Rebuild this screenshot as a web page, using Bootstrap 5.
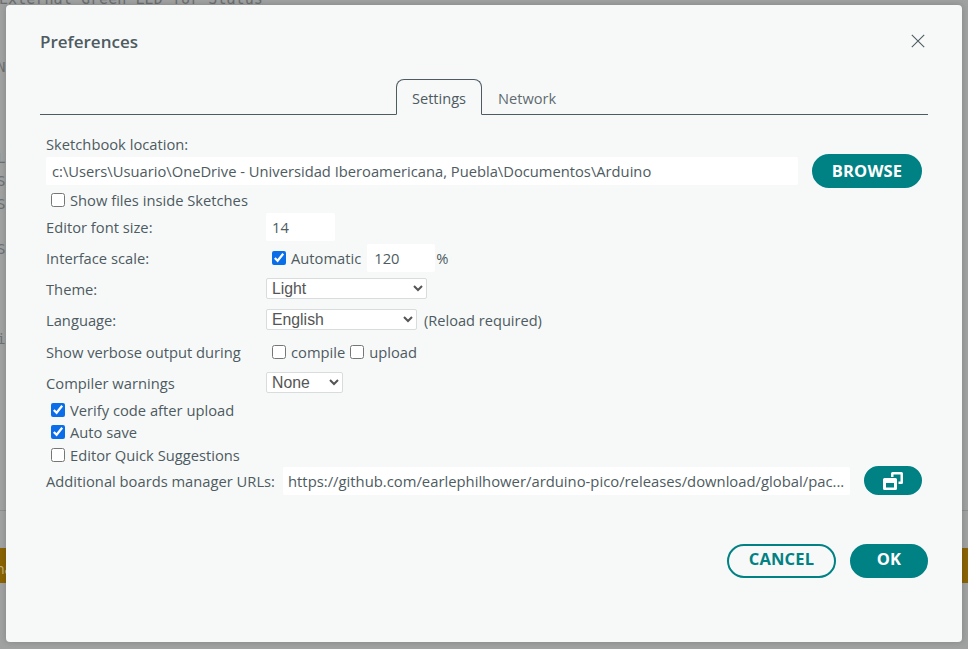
<!DOCTYPE html>
<html lang="en">
<head>
<meta charset="utf-8">
<title>Preferences</title>
<link href="https://cdn.jsdelivr.net/npm/bootstrap@5.3.0/dist/css/bootstrap.min.css" rel="stylesheet">
<style>
html,body{height:100%;overflow:hidden}
body{background:#a0a1a1;font-family:"Open Sans",sans-serif;font-size:14px;color:#4e5b61;position:relative}
.bg-code{font-family:"DejaVu Sans Mono",monospace;font-size:15px;letter-spacing:.07px;color:#6b6f70;line-height:1;white-space:pre;margin:0}
.bg-top{margin:-8px 0 0 -1px;height:66px}
.bg-rule{position:absolute;left:0;right:0;top:510px;height:1px;background:#8d8e8e}
.bg-amber{position:absolute;left:0;right:0;top:548px;height:35px;background:#8a6404}
.bg-letters{position:absolute;left:0;top:0;width:6px;height:649px;overflow:hidden}
.bg-letters span{position:absolute;left:-3px;font-family:"DejaVu Sans Mono",monospace;font-size:14px;color:#6b7274}
.bg-letters .on-amber{left:-4px;top:558px;color:#c9b27a;font-family:"Open Sans",sans-serif}
.dlg{position:absolute;left:6px;top:5px;width:956px;height:637px;background:#f7f9f9;border-radius:4px;box-shadow:0 0 6px rgba(0,0,0,.18);padding:0 34px;display:flex;flex-direction:column}
.dlg-head{height:72px;padding-top:24px}
.dlg-title{font-size:17px;font-weight:600;color:#4e5b61;line-height:26px;margin:0}
.dlg-x{width:14px;height:14px;margin:0 3px 0 0;display:block;background:none;border:0;padding:0}
.tabbar{height:38px;border-bottom:1px solid #4e5b61;padding-left:356px;flex-wrap:nowrap;align-items:flex-end}
.tabbar .nav-link{font-size:14.6px;color:#4e5b61;height:36px;padding:0 15px;line-height:38px;border-radius:8px 8px 0 0;margin-bottom:-1px;width:86px;text-align:center}
.tabbar .nav-link.active{background:#f7f9f9;color:#4e5b61;border:1px solid #4e5b61;border-bottom-color:#f7f9f9;padding:0;line-height:37px}
.tabbar .nav-link.other{color:#5f6b70;margin-left:1px;width:auto}
.form-wrap{padding:19px 6px 0;font-size:14.72px}
.fw{display:flex;align-items:center;line-height:20px}
.lbl{width:220px;flex:none}
.field{background:#fff;border:0;border-radius:2px;font-size:14.72px;color:#4e5b61;padding:0 6px;height:28px;box-shadow:none;font-family:inherit;line-height:28px}
.field-path{flex:1 1 auto;min-width:0}
.field-size{width:69px}
.field-scale{width:68px;padding-left:7px;margin:0 1px 0 6px}
.field-url{flex:1 1 auto;min-width:0;padding-left:5px;font-size:14.82px}
.chk{appearance:auto;-webkit-appearance:auto;width:14px;height:14px;margin:0;flex:none;border:0;background:none!important;accent-color:#0a6ee8}
.opt{margin-left:5px}
.reload{margin-left:7px;font-size:14.6px}
.sel{appearance:auto;-webkit-appearance:auto;width:auto;font-family:"Liberation Sans",Arial,sans-serif;font-size:15.8px;line-height:18px;height:21px;padding:0 0 0 1px;border:1px solid #d9dcdd;border-radius:2px;color:#555;background-color:#fff;background-image:none}
.sel-theme{width:161px}
.sel-lang{width:151px}
.sel-warn{width:77px}
.pill{background:#008184;border:2px solid #008184;color:#fff;font-weight:700;border-radius:17px;font-size:16.5px;line-height:1;height:34px;padding:0;display:flex;align-items:center;justify-content:center;letter-spacing:.2px}
.pill:hover{background:#008184;color:#fff;border-color:#008184}
.pill-browse{width:110px;margin-left:14px;flex:none}
.pill-copy{width:58px;height:29px;margin-left:14px;flex:none;border-radius:15px}
.pill-ghost{background:transparent;color:#008184;width:109px}
.pill-ok{width:78px}
.foot{position:absolute;right:34px;top:539px;display:flex;gap:14px}
.foot .pill{padding-bottom:3px}
.r-sketch{height:20px}
.r-path{height:28px;margin-top:3px}
.r-show{height:20px;margin-top:5px}
.r-font{height:28px;margin-top:3px}
.r-scale{height:28px;margin-top:3px}
.r-theme{height:21px;margin-top:6px}
.r-lang{height:21px;margin-top:10px}
.r-verb{height:20px;margin-top:12px}
.r-warn{height:21px;margin-top:10px}
.r-ver{height:20px;margin-top:7px}
.r-auto{height:20px;margin-top:2px}
.r-quick{height:20px;margin-top:3px}
.r-url{height:29px;margin-top:1px}
.indent{padding-left:6px}
.off{padding-left:5px}
.sp{margin-left:5px}
</style>
</head>
<body>
<p class="bg-code bg-top">External Green LED for Status</p>
<div class="bg-rule"></div>
<div class="bg-amber"></div>
<div class="bg-letters"><span style="top:57px">N</span><span style="top:148px">L</span><span style="top:171px">S</span><span style="top:194px">S</span><span style="top:239px">S</span><span style="top:329px">i</span><span class="on-amber">na</span></div>

<div class="dlg" role="dialog">
  <div class="dlg-head d-flex justify-content-between align-items-start">
    <h5 class="dlg-title">Preferences</h5>
    <button class="dlg-x" aria-label="Close"><svg width="14" height="14" viewBox="0 0 14 14" fill="none" stroke="#4e5b61" stroke-width="1.1"><path d="M.8.8l12.4 12.4M13.2.8L.8 13.2"/></svg></button>
  </div>
  <ul class="nav tabbar">
    <li class="nav-item"><a class="nav-link active" href="#">Settings</a></li>
    <li class="nav-item"><a class="nav-link other" href="#">Network</a></li>
  </ul>
  <div class="form-wrap">
    <div class="fw r-sketch">Sketchbook location:</div>
    <div class="fw r-path">
      <input class="form-control field field-path" value="c:\Users\Usuario\OneDrive - Universidad Iberoamericana, Puebla\Documentos\Arduino">
      <button class="btn pill pill-browse">BROWSE</button>
    </div>
    <div class="fw r-show off"><input class="form-check-input chk" type="checkbox"><span class="opt">Show files inside Sketches</span></div>
    <div class="fw r-font"><span class="lbl">Editor font size:</span><input class="form-control field field-size" value="14"></div>
    <div class="fw r-scale"><span class="lbl">Interface scale:</span><span class="d-flex align-items-center indent"><input class="form-check-input chk" type="checkbox" checked><span class="opt">Automatic</span></span><input class="form-control field field-scale" value="120"><span>%</span></div>
    <div class="fw r-theme"><span class="lbl">Theme:</span><select class="form-select sel sel-theme"><option>Light</option></select></div>
    <div class="fw r-lang"><span class="lbl">Language:</span><select class="form-select sel sel-lang"><option>English</option></select><span class="reload">(Reload required)</span></div>
    <div class="fw r-verb"><span class="lbl">Show verbose output during</span><span class="d-flex align-items-center indent"><input class="form-check-input chk" type="checkbox"><span class="opt">compile</span><input class="form-check-input chk sp" type="checkbox"><span class="opt">upload</span></span></div>
    <div class="fw r-warn"><span class="lbl">Compiler warnings</span><select class="form-select sel sel-warn"><option>None</option></select></div>
    <div class="fw r-ver off"><input class="form-check-input chk" type="checkbox" checked><span class="opt">Verify code after upload</span></div>
    <div class="fw r-auto off"><input class="form-check-input chk" type="checkbox" checked><span class="opt">Auto save</span></div>
    <div class="fw r-quick off"><input class="form-check-input chk" type="checkbox"><span class="opt">Editor Quick Suggestions</span></div>
    <div class="fw r-url"><span class="flex-shrink-0 text-nowrap me-2">Additional boards manager URLs:</span>
      <input class="form-control field field-url" value="https://github.com/earlephilhower/arduino-pico/releases/download/global/pac...">
      <button class="btn pill pill-copy" aria-label="Edit URLs"><svg width="20" height="18" viewBox="0 0 20 18" fill="#fff"><path d="M8 1.500A1.500 1.500 0 0 1 9.500 0h9A1.500 1.500 0 0 1 20 1.500v9a1.500 1.500 0 0 1-1.500 1.500H15.500V9.500H17.500v-7h-7V5H8z"/><path fill-rule="evenodd" d="M1.500 6h11A1.500 1.500 0 0 1 14 7.500v9a1.500 1.500 0 0 1-1.500 1.500h-11A1.500 1.500 0 0 1 0 16.500v-9A1.500 1.500 0 0 1 1.500 6zM3 11v4.500h8V11z"/></svg></button>
    </div>
  </div>
  <div class="foot">
    <button class="btn pill pill-ghost">CANCEL</button>
    <button class="btn pill pill-ok">OK</button>
  </div>
</div>
<script src="https://cdn.jsdelivr.net/npm/bootstrap@5.3.0/dist/js/bootstrap.bundle.min.js"></script>
</body>
</html>
